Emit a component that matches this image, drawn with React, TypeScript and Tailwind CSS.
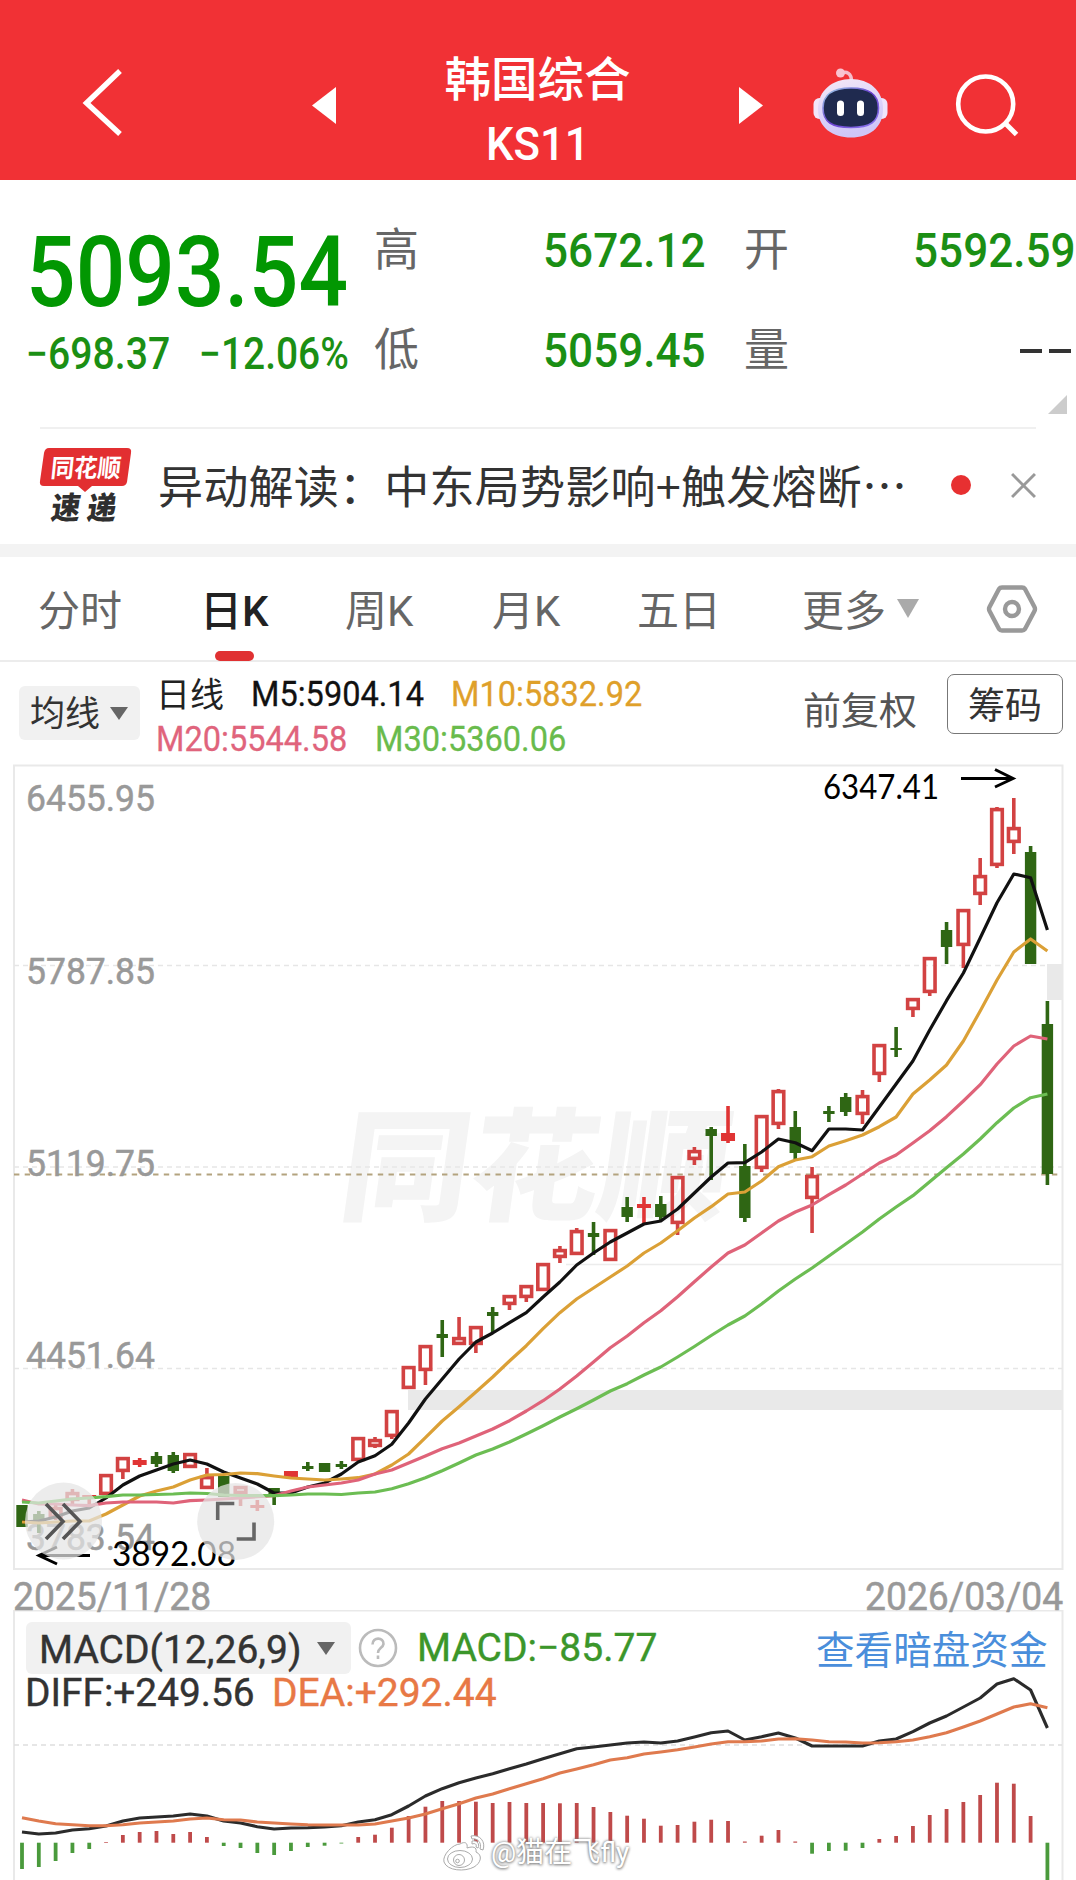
import type { ReactNode } from 'react';
import clsx from 'clsx';

const FONT = "font-[Roboto,'Noto_Sans_CJK_SC',sans-serif]";

// x of the i-th trading day
const px = (i: number) => 22 + i * 16.81;

// [high, body top, body bottom, low, kind]; r = hollow red, f = filled red, g = green
type Candle = [number, number, number, number, 'r' | 'f' | 'g'];

const CANDLES: Candle[] = [
  [1505, 1505, 1527, 1527, 'g'], [1511, 1514, 1523, 1533, 'g'], [1504, 1507, 1518, 1520, 'r'],
  [1489, 1492, 1501, 1504, 'r'], [1495, 1495, 1498, 1504, 'f'], [1474, 1474, 1495, 1495, 'r'],
  [1457, 1457, 1472, 1479, 'r'], [1458, 1460, 1465, 1467, 'f'], [1452, 1456, 1464, 1467, 'g'],
  [1452, 1455, 1471, 1473, 'g'], [1453, 1453, 1468, 1468, 'r'], [1468, 1476, 1489, 1489, 'r'],
  [1476, 1476, 1497, 1497, 'g'], [1486, 1486, 1494, 1506, 'r'], [1500, 1505, 1508, 1511, 'f'],
  [1488, 1488, 1497, 1505, 'g'], [1471, 1471, 1477, 1478, 'f'], [1462, 1466, 1469, 1471, 'g'],
  [1463, 1463, 1472, 1472, 'g'], [1461, 1464, 1467, 1469, 'g'], [1437, 1437, 1461, 1461, 'r'],
  [1437, 1439, 1447, 1448, 'r'], [1410, 1410, 1437, 1439, 'r'], [1366, 1366, 1389, 1389, 'r'],
  [1345, 1345, 1371, 1385, 'r'], [1320, 1334, 1338, 1357, 'g'], [1317, 1337, 1345, 1345, 'r'],
  [1326, 1326, 1345, 1353, 'r'], [1307, 1312, 1316, 1333, 'g'], [1295, 1295, 1305, 1310, 'r'],
  [1285, 1285, 1298, 1302, 'r'], [1263, 1263, 1291, 1291, 'r'], [1246, 1249, 1258, 1263, 'r'],
  [1228, 1230, 1255, 1255, 'r'], [1222, 1233, 1237, 1255, 'g'], [1229, 1229, 1261, 1261, 'r'],
  [1197, 1207, 1217, 1222, 'g'], [1197, 1204, 1208, 1223, 'f'], [1196, 1204, 1217, 1220, 'g'],
  [1176, 1176, 1224, 1235, 'r'], [1147, 1150, 1160, 1165, 'r'], [1127, 1129, 1136, 1180, 'g'],
  [1106, 1133, 1141, 1143, 'f'], [1144, 1166, 1218, 1222, 'g'], [1115, 1115, 1169, 1172, 'r'],
  [1089, 1090, 1125, 1129, 'r'], [1111, 1127, 1153, 1160, 'g'], [1167, 1175, 1199, 1233, 'r'],
  [1106, 1111, 1114, 1122, 'g'], [1093, 1097, 1112, 1116, 'g'], [1090, 1095, 1115, 1124, 'r'],
  [1044, 1044, 1075, 1082, 'r'], [1027, 1048, 1050, 1057, 'g'], [998, 998, 1010, 1017, 'r'],
  [957, 957, 993, 996, 'r'], [922, 930, 947, 964, 'g'], [909, 909, 946, 968, 'r'],
  [858, 875, 895, 905, 'r'], [807, 808, 866, 868, 'r'], [798, 827, 843, 854, 'r'],
  [846, 852, 964, 964, 'g'], [1001, 1024, 1174, 1185, 'g'],
];

const MA5 = [
  1522, 1521, 1517, 1511, 1508, 1498, 1485, 1476, 1470, 1464, 1460, 1464, 1472, 1478, 1484, 1493,
  1493, 1487, 1483, 1474, 1462, 1455.7, 1444.3, 1423, 1399, 1379, 1359, 1342, 1333, 1322.7, 1312.7,
  1297, 1282, 1265, 1253, 1242, 1233, 1224, 1221, 1209, 1193, 1177, 1163, 1162.7, 1152, 1139,
  1142.7, 1150.7, 1129, 1129, 1130, 1107, 1084, 1061, 1030, 1000.7, 973, 938, 902.7, 874, 877.7, 930,
];
const MA10 = [
  1522, 1523, 1522, 1521, 1521, 1514, 1505, 1496, 1491, 1487, 1480, 1475, 1474.5, 1473, 1473.7,
  1476, 1478, 1479, 1480, 1479, 1477.7, 1474, 1465, 1454, 1437.7, 1421, 1406.7, 1392, 1377, 1361,
  1345.7, 1328.7, 1312.7, 1299, 1288, 1277, 1266, 1253, 1243, 1230.7, 1218, 1206.7, 1194, 1192,
  1181, 1166.7, 1160, 1156.7, 1146, 1140.7, 1135, 1126.7, 1117, 1094, 1080, 1065, 1041, 1011, 980,
  952, 939, 951,
];
const MA20 = [
  1500, 1504, 1504, 1505, 1505.7, 1503, 1502, 1502, 1502, 1503, 1500.7, 1500, 1499, 1498, 1496.7,
  1495.7, 1491, 1487, 1485, 1483, 1480, 1474, 1470, 1463, 1456, 1448.7, 1443, 1436, 1429, 1420.7,
  1411, 1400.7, 1389, 1376, 1362, 1347.7, 1336, 1322.7, 1310.7, 1296.7, 1281.7, 1267, 1253, 1245,
  1233, 1221, 1212, 1205, 1194.7, 1185, 1174, 1163, 1155, 1143, 1130.7, 1116.7, 1101, 1084.7, 1064,
  1046, 1036, 1039,
];
const MA30 = [
  1502, 1503, 1501, 1499, 1498, 1496.7, 1495, 1495, 1494.5, 1494, 1493, 1493.5, 1495, 1495.5,
  1495.7, 1495.7, 1495, 1494, 1494, 1494.5, 1493, 1492, 1488.7, 1483.7, 1477.7, 1470.7, 1463, 1455,
  1449, 1442, 1434, 1425.7, 1417, 1408.7, 1400, 1391, 1383.7, 1375, 1367, 1357, 1346.5, 1335.5,
  1325, 1316, 1304, 1291, 1279, 1268, 1256, 1244, 1232, 1219, 1207, 1195.7, 1181.7, 1167.7, 1154,
  1139, 1122.7, 1108, 1097.7, 1094,
];

const ZERO = 1842.7;
const HIST = [
  1869, 1867, 1861, 1853, 1849, 1842, 1835, 1832, 1831, 1834, 1832, 1837, 1846, 1848, 1853, 1855,
  1851, 1847, 1845.7, 1843.5, 1837, 1834.7, 1827.7, 1816, 1806.7, 1801, 1801, 1801.7, 1803, 1802,
  1803, 1803, 1803.3, 1803, 1807, 1812, 1815.7, 1818.7, 1825.7, 1825, 1821.7, 1819.7, 1821, 1841.5,
  1835.7, 1830, 1841.5, 1853.7, 1851, 1850.7, 1848, 1839, 1836, 1826, 1815, 1809, 1802, 1795,
  1782.7, 1783.7, 1816, 1885,
];
const DIFF = [
  1832, 1834, 1833, 1830, 1828.7, 1826, 1821, 1818, 1817, 1816, 1814, 1816, 1821, 1823, 1826.7,
  1829, 1828, 1827.7, 1827, 1825.7, 1822, 1819.7, 1814.7, 1806, 1796, 1788.7, 1782.7, 1778, 1773.7,
  1768.7, 1764, 1758.7, 1753.7, 1748.7, 1747, 1745, 1743, 1742, 1743, 1741, 1737, 1732.7, 1731,
  1740, 1736.7, 1733, 1738, 1746, 1746, 1746, 1746, 1741, 1739, 1731.7, 1723, 1716, 1707, 1698,
  1684, 1678.7, 1690, 1728,
];
const DEA = [
  1817.7, 1821, 1823.7, 1824.7, 1825.7, 1825.7, 1824.7, 1823, 1822, 1821, 1819, 1818, 1819.7, 1820,
  1822, 1823, 1824, 1824.7, 1825, 1825, 1825, 1824, 1821, 1818, 1814, 1808.7, 1803.7, 1798, 1794,
  1788.7, 1783.7, 1778.7, 1773, 1769, 1764.7, 1760, 1757.7, 1754, 1752, 1749.7, 1747, 1744, 1741.7,
  1741.7, 1741, 1739, 1738.7, 1740, 1741.7, 1742, 1743, 1742.7, 1741.7, 1740, 1736.7, 1732.7, 1727,
  1721, 1714, 1707, 1703.7, 1707.7,
];

const toPoints = (ys: number[]) => ys.map((y, i) => `${px(i).toFixed(1)},${y}`).join(' ');

function Cond({ className, children }: { className?: string; children: ReactNode }) {
  return <span className={clsx('inline-block shrink-0 whitespace-nowrap', className)}>{children}</span>;
}

function Caret({ className }: { className?: string }) {
  return (
    <svg viewBox="0 0 20 14" preserveAspectRatio="none" className={clsx('shrink-0', className)}>
      <path d="M0 0H20L10 14Z" fill="currentColor" />
    </svg>
  );
}

function Robot() {
  return (
    <svg width="76" height="72" viewBox="0 0 76 72" fill="none">
      <defs>
        <linearGradient id="shell" x1="0" y1="0" x2="0.3" y2="1">
          <stop offset="0" stopColor="#f6e9f6" />
          <stop offset="0.6" stopColor="#dcd3fa" />
          <stop offset="1" stopColor="#cfc6f7" />
        </linearGradient>
        <linearGradient id="rim" x1="0" y1="0" x2="1" y2="1">
          <stop offset="0" stopColor="#9fd6e8" />
          <stop offset="0.5" stopColor="#6a3fd0" />
          <stop offset="1" stopColor="#8d7cf0" />
        </linearGradient>
      </defs>
      <path d="M27 5.500C34 2 38.500 6 38.500 13" stroke="#f5bccb" strokeWidth="3.500" />
      <circle cx="27.500" cy="5" r="4.500" fill="#f9c3d1" />
      <rect x="0.500" y="30" width="12" height="21" rx="6" fill="#f3e6fa" />
      <rect x="63" y="30" width="11.500" height="21" rx="6" fill="#efe4fb" />
      <path d="M38 11C56 11 70 22 70 41C70 60 56 69.500 38 69.500C20 69.500 5 60 5 41C5 22 20 11 38 11Z" fill="url(#shell)" />
      <path d="M38 20C56 20 65.500 26 65.500 40C65.500 54 57 59.500 38 59.500C19 59.500 10 54 10 40C10 26 20 20 38 20Z" fill="#1f2a4f" stroke="url(#rim)" strokeWidth="1.600" />
      <rect x="24" y="32.500" width="7" height="15.500" rx="3.500" fill="#fff" />
      <rect x="44" y="32.500" width="7" height="15.500" rx="3.500" fill="#fff" />
    </svg>
  );
}

function Header() {
  return (
    <header className="flex h-[180px] shrink-0 bg-[#f13135] pt-[50px] text-white">
      <div className="w-[312px] pt-[17px] pl-[80px]">
        <svg width="46" height="72" viewBox="0 0 46 72" fill="none">
          <path d="M40 4L6.500 36L40 67" stroke="#fff" strokeWidth="5.400" />
        </svg>
      </div>
      <svg className="mt-[37px]" width="24" height="37" viewBox="0 0 24 37">
        <path d="M24 0V37L0 18.500Z" fill="#fff" />
      </svg>
      <div className="flex w-[403px] flex-col items-center">
        <div className="h-[56px] text-[46.500px] leading-[60px] font-medium">韩国综合</div>
        <div className="h-[72px] origin-center scale-x-[0.93] text-[47px] leading-[76px] font-medium">KS11</div>
      </div>
      <svg className="mt-[37px]" width="24" height="37" viewBox="0 0 24 37">
        <path d="M0 0V37L24 18.500Z" fill="#fff" />
      </svg>
      <div className="mt-[18px] ml-[50px] w-[141px]">
        <Robot />
      </div>
      <svg className="mt-[20px]" width="68" height="68" viewBox="0 0 68 68" fill="none">
        <circle cx="31.700" cy="34" r="27.500" stroke="#fff" strokeWidth="4.600" />
        <path d="M51 53L62.500 64.500" stroke="#fff" strokeWidth="5" />
      </svg>
    </header>
  );
}

function Quote() {
  const label = 'w-[169px] text-[45px] text-[#666]';
  const value = 'w-[201px] origin-left scale-x-[0.9] text-[49px] font-medium text-[#1b8f14]';
  return (
    <section className="flex h-[247px] shrink-0 overflow-hidden">
      <div className="w-[374px] shrink-0 pt-[34px] pl-[26px]">
        <div className="h-[116px] leading-[116px]">
          <Cond className="origin-left scale-x-[0.882] text-[99px] font-medium text-[#029702]">5093.54</Cond>
        </div>
        <div className="flex h-[48px] leading-[48px] text-[44px] font-medium text-[#1b8f14]">
          <Cond className="w-[173px] origin-left scale-x-[0.89]">−698.37</Cond>
          <Cond className="origin-left scale-x-[0.885]">−12.06%</Cond>
        </div>
      </div>
      <div className="w-[702px] shrink-0 pt-[41px]">
        <div className="flex h-[60px] leading-[60px]">
          <Cond className={label}>高</Cond>
          <Cond className={value}>5672.12</Cond>
          <Cond className={label}>开</Cond>
          <Cond className="w-[163px] origin-left scale-x-[0.9] text-[49px] font-medium text-[#1b8f14]">5592.59</Cond>
        </div>
        <div className="mt-[40px] flex h-[60px] leading-[60px]">
          <Cond className={label}>低</Cond>
          <Cond className={value}>5059.45</Cond>
          <Cond className="w-[276px] text-[45px] text-[#666]">量</Cond>
          <div className="flex items-center gap-[7px]">
            <i className="h-[4px] w-[22px] bg-[#333]" />
            <i className="h-[4px] w-[22px] bg-[#333]" />
          </div>
        </div>
        <svg className="mt-[14px] mr-[9px] ml-auto" width="19" height="19" viewBox="0 0 19 19">
          <path d="M19 0V19H0Z" fill="#ccc" />
        </svg>
      </div>
    </section>
  );
}

function Logo() {
  return (
    <svg className="overflow-visible" width="94" height="78" viewBox="38 446 94 78" fontFamily="'Noto Sans CJK SC', sans-serif" fontWeight="900">
      <path d="M49 448H127Q132 448 131 453L127 482Q126 486 122 486H92L85 492L78 486H44Q39 486 40 481L44 453Q45 448 49 448Z" fill="#e22f31" />
      <text transform="translate(50 477) skewX(-6)" fontSize="25" textLength="70" lengthAdjust="spacingAndGlyphs" fontWeight="700" fill="#fff">同花顺</text>
      <text transform="translate(50 518.500) skewX(-8)" fontSize="31" textLength="29" lengthAdjust="spacingAndGlyphs" fill="#2f2f2f">速</text>
      <text transform="translate(86 518.500) skewX(-8)" fontSize="31" textLength="29" lengthAdjust="spacingAndGlyphs" fill="#2f2f2f">递</text>
    </svg>
  );
}

function News() {
  return (
    <section className="flex h-[117px] shrink-0 flex-col">
      <div className="mx-[40px] h-[2px] shrink-0 bg-[#f0f0f0]" />
      <div className="flex h-[115px] items-center pl-[38px]">
        <div className="mt-[-3px] w-[120px]">
          <Logo />
        </div>
        <p className="mt-[-3px] w-[793px] font-['Noto_Sans_CJK_SC',sans-serif] text-[45px] leading-[60px] tracking-[0.250px] whitespace-nowrap text-[#333]">
          异动解读：中东局势影响+触发熔断…
        </p>
        <i className="mt-[-3px] size-[20px] rounded-full bg-[#e73031]" />
        <svg className="mt-[-3px] ml-[40px]" width="25" height="25" viewBox="0 0 24 24">
          <path d="M1 1L23 23M23 1L1 23" stroke="#999" strokeWidth="2.800" />
        </svg>
      </div>
    </section>
  );
}

function Tabs() {
  return (
    <nav className="flex h-[105px] shrink-0 border-b-2 border-[#ececec] pl-[38px] text-[42px] leading-[109px] whitespace-nowrap text-[#666]">
      <span className="w-[162px]">分时</span>
      <span className="relative w-[145px] font-medium text-[#222]">
        日K
        <i className="absolute top-[94px] left-[15px] h-[10px] w-[39px] rounded-full bg-[#e03132]" />
      </span>
      <span className="w-[147px]">周K</span>
      <span className="w-[145px]">月K</span>
      <span className="w-[165px]">五日</span>
      <span className="w-[95px]">更多</span>
      <Caret className="mt-[42px] h-[19px] w-[22px] text-[#aaa]" />
      <svg className="mt-[27px] ml-[67px]" width="52" height="50" viewBox="0 0 52 50" fill="none" stroke="#999" strokeWidth="4.400">
        <path d="M16 3.500H36Q38 3.500 39 5L48.500 23Q49.500 25 48.500 27L39 45Q38 46.500 36 46.500H16Q14 46.500 13 45L3.500 27Q2.500 25 3.500 23L13 5Q14 3.500 16 3.500Z" strokeLinejoin="round" />
        <circle cx="26" cy="25" r="7" />
      </svg>
    </nav>
  );
}

function MaLegend() {
  const num = 'origin-left scale-x-[0.93] text-[35px] [-webkit-text-stroke:0.300px]';
  return (
    <section className="flex h-[102px] shrink-0 pl-[19px]">
      <div className="mt-[24px] flex h-[54px] w-[121px] items-center rounded-[6px] bg-[#f1f1f1] pl-[11px] text-[35px] text-[#333]">
        <span className="w-[80px] leading-[54px] pt-[4px]">均线</span>
        <Caret className="h-[13px] w-[18px] text-[#666]" />
      </div>
      <div className="ml-[16px] w-[647px] pt-[10px]">
        <div className="flex h-[45px] leading-[46px]">
          <span className="w-[95px] text-[34px] text-[#222]">日线</span>
          <Cond className={clsx(num, 'w-[200px] text-[#111]')}>M5:5904.14</Cond>
          <Cond className={clsx(num, 'text-[#dfa02a]')}>M10:5832.92</Cond>
        </div>
        <div className="flex h-[44px] leading-[46px]">
          <Cond className={clsx(num, 'w-[219px] text-[#e0647c]')}>M20:5544.58</Cond>
          <Cond className={clsx(num, 'text-[#69bb4c]')}>M30:5360.06</Cond>
        </div>
      </div>
      <span className="w-[144px] pt-[19px] text-[38px] leading-[60px] whitespace-nowrap text-[#555]">前复权</span>
      <div className="mt-[12px] h-[60px] w-[116px] rounded-[7px] border-[1.500px] border-[#777] text-center text-[37px] leading-[64px] text-[#333]">
        筹码
      </div>
    </section>
  );
}

function CandleMark({ i, c }: { i: number; c: Candle }) {
  const [high, top, bottom, low, kind] = c;
  const x = px(i);
  const color = kind === 'g' ? '#2f6614' : kind === 'f' ? '#e03434' : '#d24242';
  return (
    <g stroke={color} strokeWidth="3.600" fill="none">
      {high < top && <path d={`M${x} ${high}V${top}`} />}
      {low > bottom && <path d={`M${x} ${bottom}V${low}`} />}
      {kind === 'r' ? (
        <rect x={x - 5.3} y={top + 1.6} width="10.600" height={Math.max(bottom - top - 3.2, 2)} />
      ) : (
        <rect x={x - (kind === 'f' ? 7 : 5.7)} y={top} width={kind === 'f' ? 14 : 11.4} height={bottom - top} fill={color} stroke="none" />
      )}
    </g>
  );
}

function PriceChart() {
  const labels: [string, number][] = [
    ['6455.95', 811], ['5787.85', 984], ['5119.75', 1176], ['4451.64', 1368], ['3783.54', 1550],
  ];
  return (
    <svg className="block shrink-0" width="1076" height="808" viewBox="0 764 1076 808" fill="none">
      <text transform="translate(336 1211) skewX(-8)" fontFamily="'Noto Sans CJK SC', sans-serif" fontWeight="900" fontSize="122" textLength="388" lengthAdjust="spacingAndGlyphs" fill="#f4f4f4">
        同花顺
      </text>
      <rect x="14" y="765.500" width="1048.500" height="803.500" stroke="#e9e9e9" strokeWidth="2" />
      <path d="M14 965.500H1062M14 1167H1062M14 1368.500H1062" stroke="#e6e6e6" strokeWidth="1.500" strokeDasharray="5 4" />
      <path d="M566 1264.500H1062" stroke="#ececec" strokeWidth="1.300" />
      <rect x="408" y="1390" width="654" height="20" fill="#e9e9e9" />
      <rect x="1047" y="964" width="15" height="36" fill="#e9e9e9" />
      <path d="M14 1174.500H1062" stroke="#b3a37f" strokeWidth="1.800" strokeDasharray="5.400 5.300" />
      <g fontFamily="Roboto" fontSize="36" fill="#999" stroke="#999" strokeWidth="0.500">
        {labels.map(([t, y]) => (
          <text key={t} x="26" y={y} textLength="129" lengthAdjust="spacingAndGlyphs">{t}</text>
        ))}
      </g>
      {CANDLES.map((c, i) => (
        <CandleMark key={i} i={i} c={c} />
      ))}
      <g strokeWidth="3.200" strokeLinejoin="round">
        <polyline points={toPoints(MA5)} stroke="#111" />
        <polyline points={toPoints(MA10)} stroke="#dba036" />
        <polyline points={toPoints(MA20)} stroke="#df6379" />
        <polyline points={toPoints(MA30)} stroke="#6cbd53" />
      </g>
      <g fontFamily="Lato" fontSize="34" fill="#000">
        <text x="823" y="799" textLength="116" lengthAdjust="spacingAndGlyphs">6347.41</text>
        <text x="112" y="1566" textLength="124" lengthAdjust="spacingAndGlyphs">3892.08</text>
      </g>
      <g stroke="#000" strokeWidth="3">
        <path d="M961 778.500H1013M995 769.500L1013 778.500L995 787" />
        <path d="M90 1555.500H39M57 1547L39 1555.500L57 1564" />
      </g>
      <g fill="#e4e4e4" fillOpacity="0.720">
        <circle cx="63.500" cy="1521" r="38.500" />
        <circle cx="235.700" cy="1521.500" r="38.500" />
      </g>
      <g stroke="#555" strokeWidth="3.600">
        <path d="M46 1504L63 1521.500L46 1539M63 1504L80 1521.500L63 1539" />
        <path d="M217.700 1520V1503.500H234.300M254 1522.500V1539H236.700" stroke="#666" />
      </g>
    </svg>
  );
}

function Macd() {
  const text = 'origin-left text-[39px] [-webkit-text-stroke:0.400px]';
  return (
    <section className="relative h-[270px] shrink-0 overflow-hidden">
      <div className="flex pt-[12px] pl-[26px]">
        <div className="flex h-[52px] w-[325px] items-center rounded-[6px] bg-[#f1f1f1] pl-[13px] text-[#333]">
          <Cond className={clsx(text, 'w-[278px] pt-[3px] leading-[52px]')}>MACD(12,26,9)</Cond>
          <Caret className="h-[13px] w-[18px] text-[#666]" />
        </div>
        <svg className="mt-[6px] ml-[7px]" width="40" height="40" viewBox="0 0 40 40" fill="none" stroke="#bbb" strokeWidth="2.600">
          <circle cx="20" cy="20" r="18" />
          <path d="M14.500 16.500C14.500 8.500 26 9 25.500 16C25 20 20 20 20 25M20 27.500V31" />
        </svg>
        <Cond className={clsx(text, 'ml-[19px] w-[399px] leading-[53px] text-[#3b962a]')}>MACD:−85.77</Cond>
        <span className="text-[38.600px] leading-[58px] whitespace-nowrap text-[#4a8edb]">查看暗盘资金</span>
      </div>
      <div className="mt-[-5px] flex pl-[25px] leading-[36px]">
        <Cond className={clsx(text, 'w-[247px] scale-x-[0.995] text-[#333]')}>DIFF:+249.56</Cond>
        <Cond className={clsx(text, 'text-[#e87845]')}>DEA:+292.44</Cond>
      </div>
      <svg className="absolute inset-0" width="1076" height="270" viewBox="0 1610 1076 270" fill="none">
        <path d="M14 1880V1610.500H1062.500V1880" stroke="#e9e9e9" strokeWidth="2" />
        <path d="M14 1745H1062" stroke="#dedede" strokeWidth="1.300" strokeDasharray="5 4" />
        {HIST.map((y, i) => (
          <path key={i} d={`M${px(i)} ${ZERO}V${y}`} stroke={y > ZERO ? '#4a9a3c' : '#bf4a4a'} strokeWidth="3.800" />
        ))}
        <g strokeWidth="3.100" strokeLinejoin="round">
          <polyline points={toPoints(DIFF)} stroke="#2b2b2b" />
          <polyline points={toPoints(DEA)} stroke="#df7a4e" />
        </g>
      </svg>
      <div className="absolute top-[224px] left-[443px] flex items-center gap-[4px] text-white">
        <svg width="44" height="38" viewBox="0 0 44 38" fill="#fff" stroke="#aaa" strokeWidth="1">
          <path d="M17 10C22 7 25 9 24 14C30 12 34 13 33 18C40 21 38 29 31 33C22 38 4 37 1 28C-1 21 10 10 17 10Z" />
          <ellipse cx="17" cy="25" rx="12.500" ry="8.500" />
          <circle cx="16" cy="26" r="5.500" />
          <circle cx="14.500" cy="27" r="1.800" />
          <path d="M28 2C37 0 43 8 40 16L37 15C39 9 35 4 29 5Z" />
          <path d="M29 7C34 6 37 10 35 14L33 13C34 10 32 9 29 10Z" />
        </svg>
        <span className="text-[28px] leading-[36px] whitespace-nowrap [text-shadow:0_0_3px_#777,0_1px_3px_#888]">@猫在飞fly</span>
      </div>
    </section>
  );
}

export default function App() {
  return (
    <div lang="zh-CN" className={clsx('flex h-[1880px] w-[1076px] flex-col overflow-hidden bg-white', FONT)}>
      <Header />
      <Quote />
      <News />
      <div className="h-[13px] shrink-0 bg-[#f3f3f3]" />
      <Tabs />
      <MaLegend />
      <PriceChart />
      <div className="z-10 flex h-[38px] shrink-0 justify-between pr-[13px] pl-[13px] text-[38px] leading-[51px] text-[#999] [-webkit-text-stroke:0.500px]">
        <Cond className="origin-left scale-x-[0.98]">2025/11/28</Cond>
        <Cond className="origin-right scale-x-[0.98]">2026/03/04</Cond>
      </div>
      <Macd />
    </div>
  );
}
